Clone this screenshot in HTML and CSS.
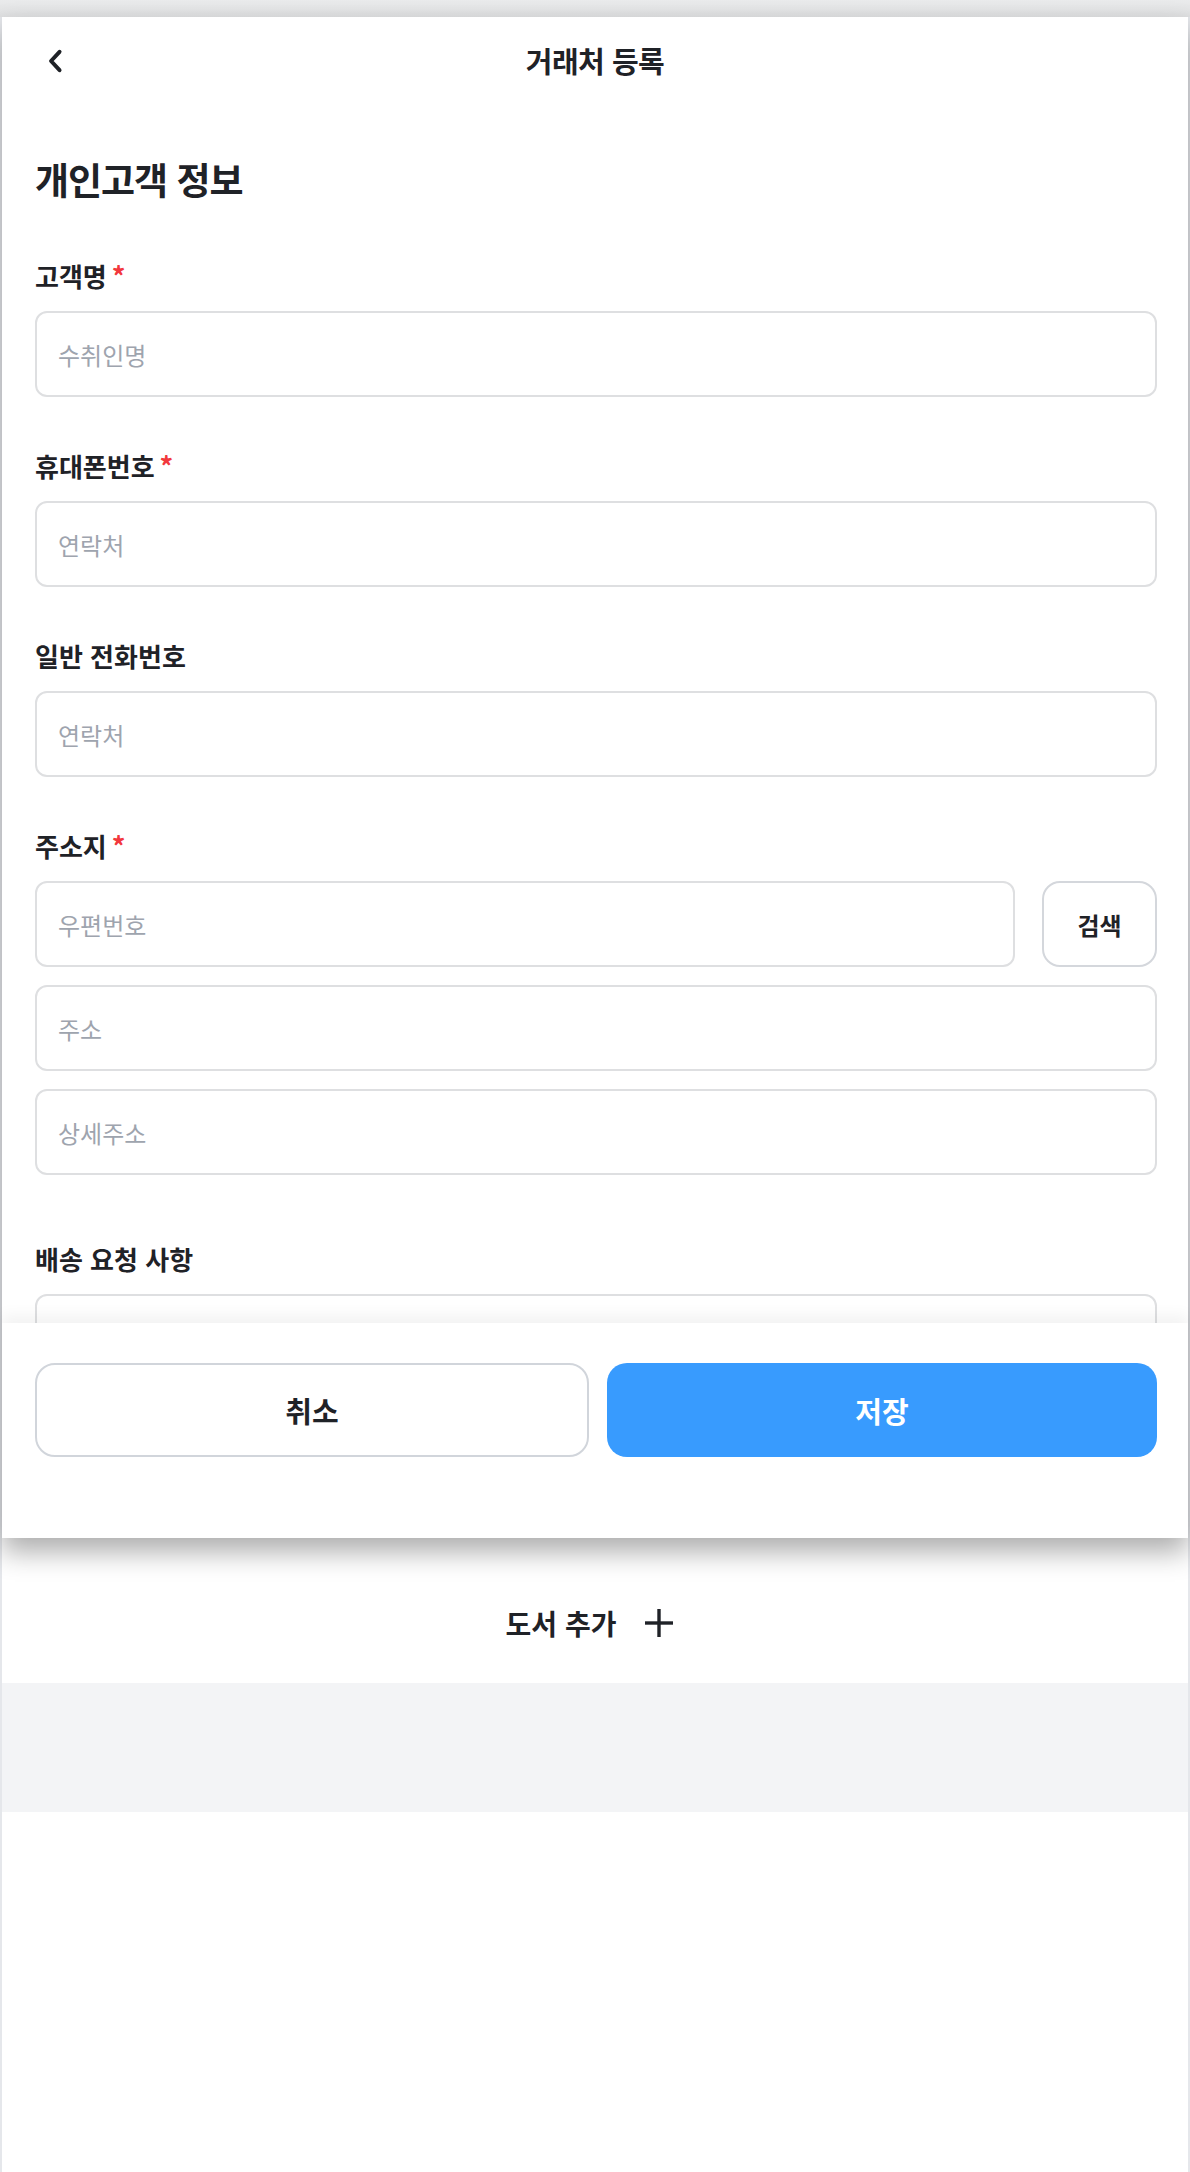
FILE: index.html
```html
<!DOCTYPE html>
<html lang="ko">
<head>
  <meta charset="utf-8">
  <title>거래처 등록</title>
  <link rel="stylesheet" href="styles.css">
</head>
<body>
  <div class="screen">
    <div class="top-strip"></div>

    <div class="sheet">
      <div class="sheet-header">
        <button class="back-btn" type="button" aria-label="뒤로">
          <svg width="34" height="34" viewBox="0 0 24 24" fill="none" stroke="#1f2227" stroke-width="2.8" stroke-linecap="round" stroke-linejoin="round">
            <polyline points="14.5 5.5 8.5 12 14.5 18.5"></polyline>
          </svg>
        </button>
        <h2 class="sheet-title">거래처 등록</h2>
      </div>

      <div class="sheet-body">
        <h1 class="section-title">개인고객 정보</h1>

        <div class="field">
          <label class="field-label">고객명<span class="req">*</span></label>
          <input class="text-input" type="text" placeholder="수취인명">
        </div>

        <div class="field">
          <label class="field-label">휴대폰번호<span class="req">*</span></label>
          <input class="text-input" type="text" placeholder="연락처">
        </div>

        <div class="field">
          <label class="field-label">일반 전화번호</label>
          <input class="text-input" type="text" placeholder="연락처">
        </div>

        <div class="field field-address">
          <label class="field-label">주소지<span class="req">*</span></label>
          <div class="zip-row">
            <input class="text-input" type="text" placeholder="우편번호">
            <button class="search-btn" type="button">검색</button>
          </div>
          <input class="text-input" type="text" placeholder="주소">
          <input class="text-input" type="text" placeholder="상세주소">
        </div>

        <div class="field">
          <label class="field-label">배송 요청 사항</label>
          <textarea class="text-input text-area"></textarea>
        </div>
      </div>

      <div class="sheet-footer">
        <button class="btn btn-cancel" type="button">취소</button>
        <button class="btn btn-save" type="button">저장</button>
      </div>
    </div>

    <div class="below">
      <div class="add-book">
        <span>도서 추가</span>
        <svg width="30" height="30" viewBox="0 0 30 30" stroke="#1f2227" stroke-width="3.4">
          <line x1="15" y1="1" x2="15" y2="29"></line>
          <line x1="1" y1="15" x2="29" y2="15"></line>
        </svg>
      </div>
      <div class="gray-band"></div>
    </div>
  </div>
</body>
</html>
```

FILE: styles.css
```css
* {
  box-sizing: border-box;
}

html, body {
  margin: 0;
  padding: 0;
}

body {
  background: #e5e7eb;
  font-family: "Noto Sans CJK KR", "Noto Sans", sans-serif;
  color: #1f2227;
}

.screen {
  margin: 0 2px;
  min-height: 2172px;
  background: #fff;
  display: flex;
  flex-direction: column;
}

.top-strip {
  height: 17px;
  margin: 0 -2px;
  background: linear-gradient(180deg, #eaebec 0%, #dfe0e1 100%);
}

.sheet {
  position: relative;
  z-index: 2;
  height: 1521px;
  background: #fff;
  display: flex;
  flex-direction: column;
  box-shadow: 0 14px 26px rgba(0, 0, 0, .32);
}

/* header */
.sheet-header {
  height: 86px;
  display: flex;
  align-items: center;
  justify-content: center;
  position: relative;
}

.back-btn {
  position: absolute;
  left: 37px;
  top: 27px;
  width: 34px;
  height: 34px;
  padding: 0;
  border: none;
  background: none;
  display: flex;
  align-items: center;
  justify-content: center;
}

.sheet-title {
  margin: 0;
  font-size: 29px;
  font-weight: 700;
  letter-spacing: -0.5px;
}

/* body */
.sheet-body {
  flex: 1;
  overflow: hidden;
  padding: 50px 31px 0 33px;
}

.section-title {
  margin: 0 0 54px;
  font-size: 37px;
  line-height: 52px;
  font-weight: 700;
  letter-spacing: -1px;
}

.field {
  display: flex;
  flex-direction: column;
  gap: 18px;
  margin-bottom: 52px;
}

.field-address {
  margin-bottom: 67px;
}

.field-label {
  font-size: 26px;
  line-height: 34px;
  font-weight: 700;
}

.req {
  color: #f2383d;
  margin-left: 5px;
  font-size: 27px;
}

.text-input {
  display: block;
  width: 100%;
  height: 86px;
  padding: 0 21px;
  border: 2px solid #dedfe1;
  border-radius: 12px;
  background: #fff;
  font-family: inherit;
  font-size: 24px;
  color: #1f2227;
  outline: none;
}

.text-input::placeholder {
  color: #9ea4ae;
}

.text-area {
  height: 160px;
  resize: none;
}

.zip-row {
  display: flex;
  gap: 27px;
}

.zip-row .text-input {
  flex: 1;
}

.search-btn {
  width: 115px;
  height: 86px;
  border: 2px solid #d4d7dc;
  border-radius: 18px;
  background: #fff;
  font-family: inherit;
  font-size: 24px;
  font-weight: 700;
  color: #1f2227;
}

/* footer */
.sheet-footer {
  height: 215px;
  padding: 40px 31px 0 33px;
  display: flex;
  gap: 18px;
  background: #fff;
  box-shadow: 0 -8px 14px rgba(0, 0, 0, .05);
  position: relative;
}

.btn {
  flex: 1;
  height: 94px;
  border-radius: 20px;
  font-family: inherit;
  font-size: 29px;
  font-weight: 700;
}

.btn-cancel {
  background: #fff;
  border: 2px solid #d1d5db;
  color: #1f2227;
}

.btn-save {
  background: #389bfe;
  border: none;
  color: #fff;
}

/* page behind */
.below {
  padding-top: 20px;
}

.add-book {
  height: 125px;
  display: flex;
  align-items: center;
  justify-content: center;
  gap: 28px;
  font-size: 28px;
  font-weight: 600;
  padding: 4px 0 0;
  margin-left: -10px;
}

.gray-band {
  height: 129px;
  background: #f3f4f6;
}
```
